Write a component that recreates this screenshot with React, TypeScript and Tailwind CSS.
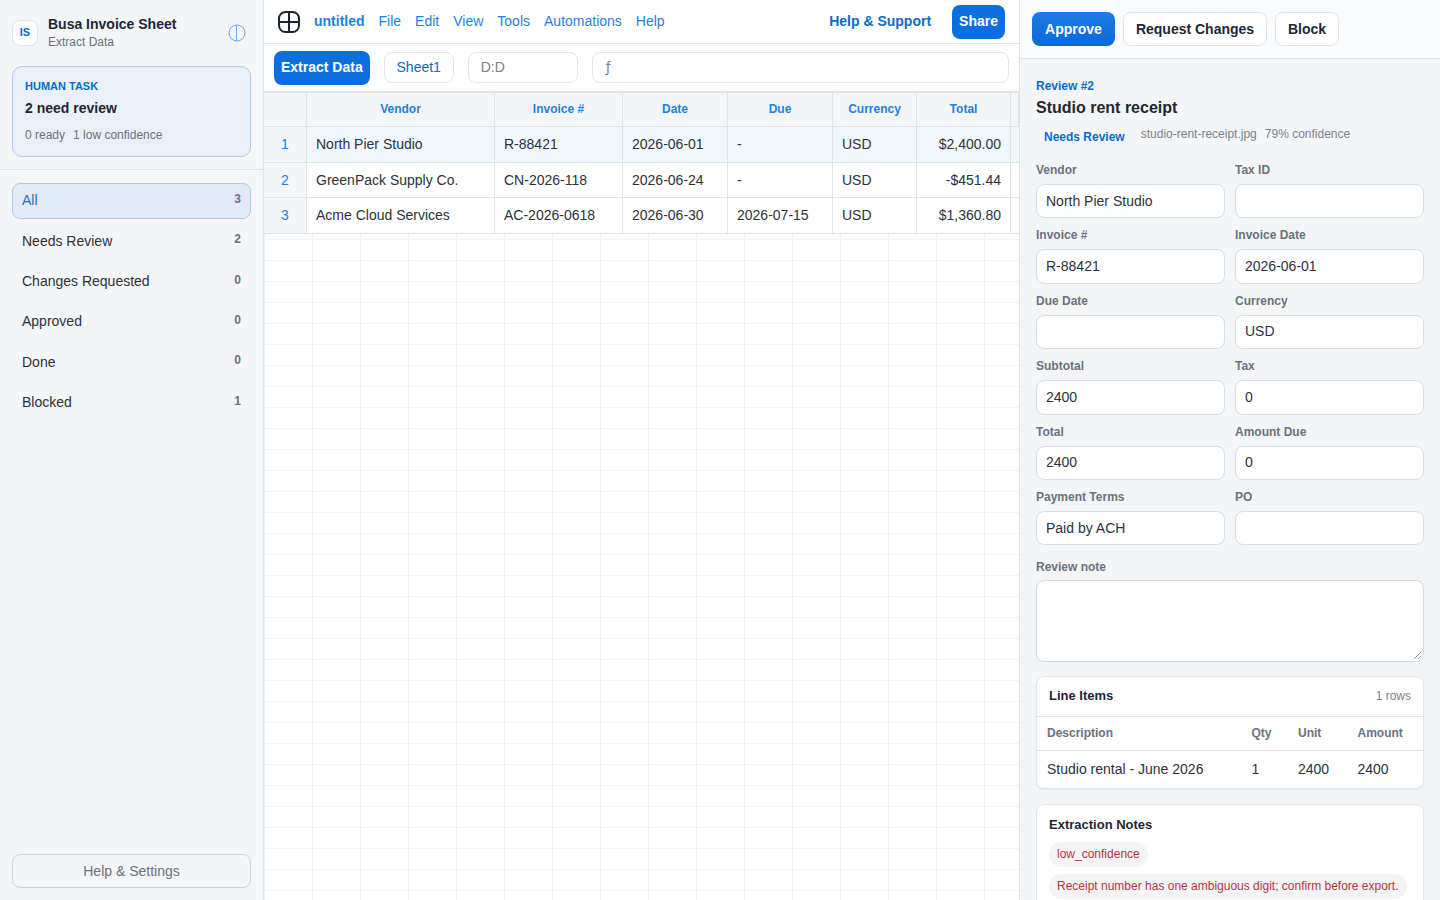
import { Fragment } from "react";

const queues = [
  { name: "All", count: 3 },
  { name: "Needs Review", count: 2 },
  { name: "Changes Requested", count: 0 },
  { name: "Approved", count: 0 },
  { name: "Done", count: 0 },
  { name: "Blocked", count: 1 },
];

const columns = ["Vendor", "Invoice #", "Date", "Due", "Currency", "Total"];

const rows = [
  ["North Pier Studio", "R-88421", "2026-06-01", "-", "USD", "$2,400.00"],
  ["GreenPack Supply Co.", "CN-2026-118", "2026-06-24", "-", "USD", "-$451.44"],
  ["Acme Cloud Services", "AC-2026-0618", "2026-06-30", "2026-07-15", "USD", "$1,360.80"],
];

const fields = [
  ["Vendor", "North Pier Studio"],
  ["Tax ID", ""],
  ["Invoice #", "R-88421"],
  ["Invoice Date", "2026-06-01"],
  ["Due Date", ""],
  ["Currency", "USD"],
  ["Subtotal", "2400"],
  ["Tax", "0"],
  ["Total", "2400"],
  ["Amount Due", "0"],
  ["Payment Terms", "Paid by ACH"],
  ["PO", ""],
];

function Sidebar() {
  return (
    <aside className="flex h-full w-[264px] shrink-0 flex-col border-r border-[#dfe3e8] bg-[#f3f5f7]">
      <div className="flex h-[66px] items-center px-3 pb-[1px]">
        <div className="flex h-[26px] w-[26px] items-center justify-center rounded-lg border border-[#dfe3e8] bg-white text-[11px] font-bold text-[#0b6bcb]">
          IS
        </div>
        <div className="ml-[10px] flex-1">
          <div className="mb-[1px] text-[14px] leading-[17px] font-bold text-[#1f2733]">Busa Invoice Sheet</div>
          <div className="text-[12px] leading-[16px] text-[#6b7280]">Extract Data</div>
        </div>
        <svg className="mr-[5.5px]" width="18" height="18" viewBox="0 0 18 18" fill="none" stroke="#6fa8e8" strokeWidth="1">
          <circle cx="9" cy="9" r="8" />
          <path d="M8.5 1V17" />
        </svg>
      </div>
      <div className="mx-3 h-[91px] rounded-[10px] border border-[#a9cdf2] bg-[#e9f0f9] px-3 pt-[12px]">
        <div className="text-[11px] leading-[14px] font-bold text-[#0b6bcb]">HUMAN TASK</div>
        <div className="mt-[6px] text-[14px] leading-[18px] font-bold text-[#1f2733]">2 need review</div>
        <div className="mt-[10px] flex gap-2 text-[12px] leading-[16px] text-[#6b7280]">
          <span>0 ready</span>
          <span>1 low confidence</span>
        </div>
      </div>
      <div className="mt-3 flex flex-col gap-1 border-t border-[#dfe3e8] px-3 pt-[12.6px]">
        {queues.map((q, i) => (
          <div
            key={q.name}
            className={
              i === 0
                ? "flex h-[36.4px] items-center justify-between rounded-lg border border-[#a9cdf2] bg-[#e1eaf6] px-[9px] text-[14px] text-[#2a6fc0]"
                : "flex h-[36.4px] items-center justify-between rounded-lg border border-transparent px-[9px] text-[14px] text-[#2b323c]"
            }
          >
            <span>{q.name}</span>
            <span className="mb-[4px] text-[12px] font-bold text-[#6b7280]">{q.count}</span>
          </div>
        ))}
      </div>
      <div className="mt-auto px-3 pb-3">
        <button className="h-[34px] w-full rounded-lg border border-[#cfd4da] text-[14px] text-[#6b7280]">
          Help &amp; Settings
        </button>
      </div>
    </aside>
  );
}

function TopBar() {
  return (
    <div className="flex h-[44px] shrink-0 items-center border-b border-[#e2e5e9] bg-white px-[14px]">
      <svg width="22" height="22" viewBox="0 0 22 22" fill="none" stroke="#1b2230" strokeWidth="2" className="mr-[14px]">
        <rect x="1" y="1" width="20" height="20" rx="6.5" />
        <path d="M11 1V21M1 11H21" />
      </svg>
      <span className="mr-[14px] text-[14px] font-bold text-[#1e7fe6]">untitled</span>
      <nav className="flex gap-[14px] text-[14px] text-[#1e7fe6]">
        <span>File</span>
        <span>Edit</span>
        <span>View</span>
        <span>Tools</span>
        <span>Automations</span>
        <span>Help</span>
      </nav>
      <span className="mr-[21px] ml-auto text-[14px] font-bold text-[#0b6bcb]">Help &amp; Support</span>
      <button className="h-[34px] rounded-lg bg-[#0b6fdf] px-[7px] text-[14px] font-bold text-white">Share</button>
    </div>
  );
}

function Toolbar() {
  return (
    <div className="flex h-[47px] shrink-0 items-center gap-[14px] bg-white px-[10px]">
      <button className="h-[34px] rounded-lg bg-[#0b6fdf] px-[7px] text-[14px] font-bold text-white">Extract Data</button>
      <div className="flex h-[31px] w-[70px] items-center justify-center rounded-lg border border-[#e2e5e9] text-[14px] text-[#0b6bcb]">
        Sheet1
      </div>
      <div className="flex h-[31px] w-[110px] items-center rounded-lg border border-[#e2e5e9] px-3 text-[14px] text-[#7b828c]">
        D:D
      </div>
      <div className="flex h-[31px] flex-1 items-center rounded-lg border border-[#e2e5e9] px-[13px] font-['DejaVu_Sans',sans-serif] text-[14px] text-[#7b828c]">
        ƒ
      </div>
    </div>
  );
}

function Sheet() {
  const headCell = "flex h-[34px] items-center justify-center border-r border-b border-[#dfe3e8] bg-[#f3f5f7] pb-[2px] text-[12px] font-bold text-[#1e7fe6]";
  return (
    <div className="min-h-0 flex-1 bg-white bg-[linear-gradient(#f1f3f5_1px,transparent_1px),linear-gradient(90deg,#f1f3f5_1px,transparent_1px)] bg-[size:48px_21px] bg-[position:0_1px]">
      <div className="grid grid-cols-[43px_188px_128px_105px_105px_84px_94px_1fr] border-t-2 border-[#e2e5e9] text-[14px] text-[#2b323c]">
        <div className={headCell}></div>
        {columns.map((c) => (
          <div key={c} className={headCell}>
            {c}
          </div>
        ))}
        <div className={headCell}></div>
        {rows.map((row, r) => (
          <Fragment key={row[0]}>
            <div className="flex h-[35.6px] items-center justify-center border-r border-b border-[#dfe3e8] bg-[#f3f5f7] pt-[1px] text-[#1e7fe6]">
              {r + 1}
            </div>
            {row.map((cell, c) => (
              <div
                key={c}
                className={
                  (r === 0 ? "bg-[#f2f7fc] " : "bg-white ") +
                  (c === 5 ? "justify-end " : "") +
                  "flex h-[35.6px] items-center border-r border-b border-[#dfe3e8] px-[9px] pt-[1px]"
                }
              >
                {cell}
              </div>
            ))}
            <div className={(r === 0 ? "bg-[#f2f7fc] " : "bg-white ") + "h-[35.6px] border-b border-[#dfe3e8]"}></div>
          </Fragment>
        ))}
      </div>
    </div>
  );
}

function ReviewPanel() {
  return (
    <aside className="flex h-full w-[421px] shrink-0 flex-col border-l border-[#dfe3e8] bg-[#f3f5f7]">
      <div className="flex h-[59px] shrink-0 items-center gap-2 border-b border-[#dfe3e8] bg-[#fafbfc] px-3">
        <button className="h-[34px] w-[83px] rounded-lg bg-[linear-gradient(#1a7ce6,#0b6bd9)] text-[14px] font-bold text-white">Approve</button>
        <button className="h-[34px] w-[144px] rounded-lg border border-[#dfe3e8] bg-white text-[14px] font-bold text-[#1f2733]">
          Request Changes
        </button>
        <button className="h-[34px] w-[64px] rounded-lg border border-[#dfe3e8] bg-white text-[14px] font-bold text-[#1f2733]">
          Block
        </button>
      </div>
      <div className="min-h-0 flex-1 overflow-hidden px-4 pt-[20px]">
        <div className="text-[12px] leading-[14px] font-bold text-[#0b6bcb]">Review #2</div>
        <div className="mt-[4px] text-[16px] leading-[22px] font-bold text-[#1f2733]">Studio rent receipt</div>
        <div className="mt-[8px] flex h-[20px] items-start">
          <span className="ml-2 pt-[3px] text-[12px] leading-[14px] font-bold text-[#0b6bcb]">Needs Review</span>
          <span className="ml-4 text-[12px] leading-[14px] text-[#7b828c]">studio-rent-receipt.jpg</span>
          <span className="ml-2 text-[12px] leading-[14px] text-[#7b828c]">79% confidence</span>
        </div>
        <div className="mt-[16px] grid grid-cols-2 gap-x-[10px] gap-y-[10px]">
          {fields.map(([label, value]) => (
            <div key={label}>
              <div className="h-[21px] text-[12px] leading-[14px] font-bold text-[#6b7280]">{label}</div>
              <div className="flex h-[34.4px] items-center rounded-lg border border-[#d9dde3] bg-white px-[9px] text-[14px] text-[#2b323c]">
                {value}
              </div>
            </div>
          ))}
        </div>
        <div className="mt-[15px] h-[20px] text-[12px] leading-[14px] font-bold text-[#6b7280]">Review note</div>
        <div className="relative h-[82px] rounded-lg border border-[#d5d9de] bg-white">
          <svg className="absolute right-[1px] bottom-[1px]" width="9" height="9" viewBox="0 0 9 9" stroke="#6b7280" strokeWidth="0.8">
            <path d="M1 8L8 1M5 8L8 5" />
          </svg>
        </div>
        <div className="mt-[14px] h-[113px] rounded-lg border border-[#e2e5e9] bg-white shadow-[0_1px_2px_rgba(0,0,0,0.05)]">
          <div className="flex h-[40px] items-center justify-between border-b border-[#e2e5e9] px-3 pb-[2px]">
            <span className="text-[13px] font-bold text-[#1f2733]">Line Items</span>
            <span className="text-[12px] text-[#7b828c]">1 rows</span>
          </div>
          <div className="grid h-[34px] grid-cols-[204.5px_46.5px_59.5px_1fr] items-center border-b border-[#e2e5e9] px-[10px] pb-[2px] text-[12px] font-bold text-[#6b7280]">
            <span>Description</span>
            <span>Qty</span>
            <span>Unit</span>
            <span>Amount</span>
          </div>
          <div className="grid h-[37px] grid-cols-[204.5px_46.5px_59.5px_1fr] items-center px-[10px] text-[14px] text-[#2b323c]">
            <span>Studio rental - June 2026</span>
            <span>1</span>
            <span>2400</span>
            <span>2400</span>
          </div>
        </div>
        <div className="mt-[15px] rounded-lg border border-[#e2e5e9] bg-white px-3 pt-[12px] pb-3">
          <div className="text-[13px] leading-[15px] font-bold text-[#1f2733]">Extraction Notes</div>
          <div className="mt-[10px] flex flex-col items-start gap-[7px] text-[12px] text-[#b3363e]">
            <span className="rounded-full bg-[#f3f4f6] px-2 py-[4px] leading-[17px]">low_confidence</span>
            <span className="rounded-full bg-[#f3f4f6] px-2 py-[4px] leading-[17px]">
              Receipt number has one ambiguous digit; confirm before export.
            </span>
          </div>
        </div>
      </div>
    </aside>
  );
}

export default function App() {
  return (
    <div className="flex h-[900px] w-[1440px] overflow-hidden bg-white font-['Liberation_Sans',Arial,sans-serif]">
      <Sidebar />
      <main className="flex h-full min-w-0 flex-1 flex-col">
        <TopBar />
        <Toolbar />
        <Sheet />
      </main>
      <ReviewPanel />
    </div>
  );
}
